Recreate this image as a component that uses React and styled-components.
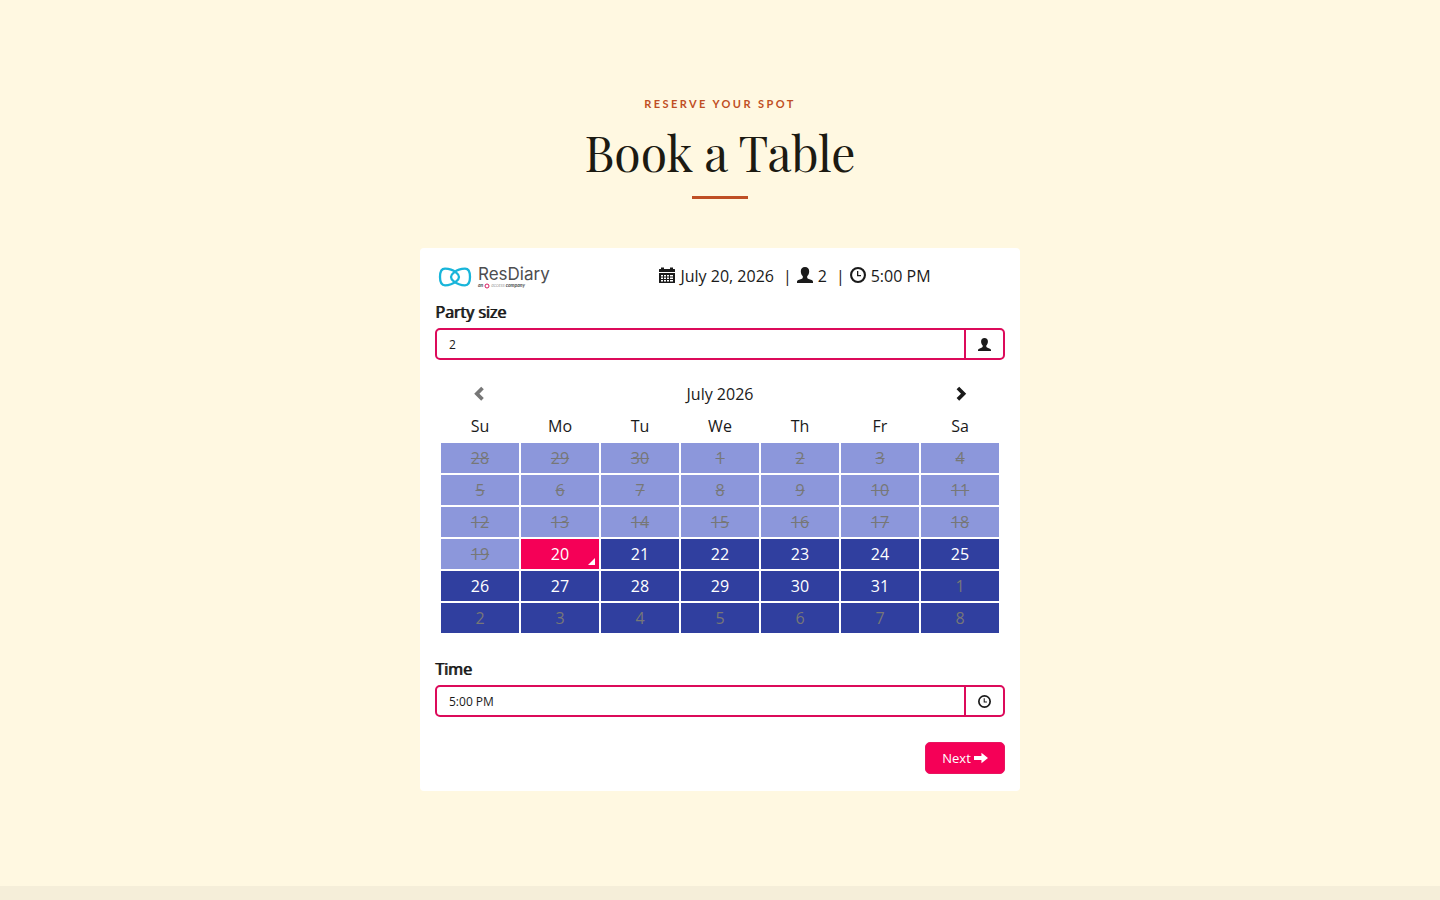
import React, { useState } from "react";

//Importing styles
import styled, { createGlobalStyle } from 'styled-components'


// Global styles
const GlobalStyle = createGlobalStyle`
    * {
        box-sizing: border-box;
    }

    body {
        margin: 0;
        background: #fff8e1;
        color: #1a1a1a;
        font-family: 'Open Sans', 'Noto Sans', sans-serif;
        font-size: 16px;
        line-height: 24px;
    }

    button, select {
        font-family: inherit;
    }
`;


// Page components
const Page = styled.div`
    display: flex;
    flex-direction: column;
    min-height: 100vh;
`;

const BookingSection = styled.section`
    display: flex;
    flex-direction: column;
    align-items: center;
    padding: 96px 24px 95px;
`;

const NextSection = styled.div`
    flex: 1;
    background: #f5eed9;
`;

const Eyebrow = styled.p`
    margin: 0;
    color: #bf4f24;
    font-family: Lato, sans-serif;
    font-size: 11px;
    font-weight: 700;
    letter-spacing: 0.22em;
    line-height: 16px;
    text-transform: uppercase;
`;

const Title = styled.h1`
    margin: 10px 0 14px;
    color: #1c1a12;
    font-family: 'Playfair Display', 'Liberation Serif', serif;
    font-size: 48px;
    font-weight: 400;
    line-height: 60px;
`;

const Rule = styled.div`
    width: 56px;
    height: 3px;
    margin-bottom: 49px;
    background: #bf4f24;
`;

const Card = styled.form`
    width: 100%;
    max-width: 600px;
    padding: 15px 15px 17px;
    border-radius: 4px;
    background: #fff;
`;


// Summary row styles
const CardHeader = styled.header`
    display: flex;
    align-items: center;
    height: 26px;
`;

const LogoLink = styled.a`
    display: flex;
    align-items: center;
    width: 150px;
    padding: 1px 0 0 3px;
    color: #4d4d4f;
    text-decoration: none;
`;

const LogoText = styled.span`
    display: flex;
    flex-direction: column;
    margin-left: 6px;
    font-family: Inter, sans-serif;
    font-size: 17px;
    line-height: 18px;
`;

const LogoTagline = styled.small`
    display: flex;
    align-items: center;
    gap: 1px;
    font-family: Lato, sans-serif;
    font-size: 5px;
    font-style: italic;
    font-weight: 700;
    line-height: 5px;

    i {
        color: #aaa;
        font-weight: 400;
    }
`;

const Summary = styled.div`
    display: flex;
    flex: 1;
    align-items: center;
    justify-content: center;
    gap: 5px;

    svg {
        margin-bottom: 2px;
    }
`;

const Divider = styled.span`
    margin-left: 4px;
`;


// Field styles
const Label = styled.label`
    display: block;
    margin-top: ${props => props.$gap};
    margin-bottom: 4px;
    text-shadow: 1px 0 currentColor;
`;

const Field = styled.div`
    display: flex;
    height: 32px;
    border: 2px solid #dc0a5a;
    border-radius: 5px;
`;

const Select = styled.select`
    flex: 1;
    padding: 0 12px;
    border: 0;
    background: transparent;
    color: #1a1a1a;
    font-size: 12px;
    appearance: none;
`;

const Addon = styled.span`
    display: flex;
    align-items: center;
    justify-content: center;
    width: 39px;
    border-left: 2px solid #dc0a5a;
`;


// Calendar styles
const Calendar = styled.table`
    width: calc(100% - 10px);
    margin: 18px 5px 0;
    border-collapse: collapse;
    table-layout: fixed;

    th, td {
        height: 32px;
        padding: 0;
        font-weight: 400;
        text-align: center;
    }
`;

const NavButton = styled.button`
    display: flex;
    align-items: center;
    justify-content: center;
    width: 100%;
    height: 32px;
    padding: 0;
    border: 0;
    background: none;
    color: #1a1a1a;

    &:disabled {
        color: #777;
    }
`;

const Day = styled.button`
    position: relative;
    display: block;
    width: 100%;
    height: 32px;
    padding: 0;
    border: 1px solid #fff;
    background: ${props => props.$selected ? '#f50057' : '#303f9f'};
    color: ${props => props.$outside ? '#777' : '#fff'};
    font-size: 16px;
    line-height: 24px;

    &:disabled {
        background: #8c97db;
        color: #777;
        text-decoration: line-through;
    }
`;

const TodayMark = styled.span`
    position: absolute;
    right: 4px;
    bottom: 4px;
    border: solid transparent;
    border-width: 0 0 7px 7px;
    border-bottom-color: #fff;
`;


// Footer styles
const Actions = styled.div`
    display: flex;
    justify-content: flex-end;
    margin-top: 25px;
`;

const NextButton = styled.button`
    display: flex;
    align-items: center;
    justify-content: center;
    gap: 3px;
    width: 80px;
    height: 32px;
    padding: 0;
    border: 1px solid #e8155f;
    border-radius: 5px;
    background: #f50057;
    color: #fff;
    font-size: 13px;
`;


// Icons
const icons = {
    calendar: <path d="M0 2.500Q0 2 .5 2H2V.5h3V2h6V.5h3V2h1.500q.5 0 .5.500V5H0zM0 6h16v9.500q0 .5-.5.500H.5q-.5 0-.5-.5zM2 8v1.500h2V8zm3 0v1.500h2V8zm3 0v1.500h2V8zm3 0v1.500h3V8zM2 10.500V12h2v-1.500zm3 0V12h2v-1.500zm3 0V12h2v-1.500zm3 0V12h3v-1.500zM2 13v1.500h2V13zm3 0v1.500h2V13zm3 0v1.500h2V13zm3 0v1.500h3V13z" fillRule="evenodd" />,
    user: <path d="M8 0c2.700 0 4.200 1.700 4.200 4.300 0 2.200-.8 3.900-2 5v1.200c0 .6.300.9.900 1.200l3.500 1.400c.9.400 1.400 1 1.400 1.900v1H0v-1c0-.9.500-1.500 1.400-1.900l3.500-1.400c.6-.3.900-.6.900-1.200V9.300c-1.200-1.100-2-2.800-2-5C3.800 1.700 5.300 0 8 0z" />,
    clock: <path d="M8 0a8 8 0 1 1 0 16A8 8 0 0 1 8 0zm0 2.100a5.900 5.900 0 1 0 0 11.800A5.900 5.900 0 0 0 8 2.100zM7 4h1.300v4H11v1.300H7z" fillRule="evenodd" />,
    left: <path d="M9.200.700l2.600 2.600-4.400 4.400 4.400 4.400-2.600 2.600-7-7z" />,
    right: <path d="M7.200.7L4.600 3.300 9 7.700l-4.400 4.400 2.600 2.600 7-7z" />,
    arrow: <path d="M0 5.700h8.500V2L16 8l-7.500 6v-3.700H0z" />,
};

function Icon({ name, size = 16 }) {
    return (
        <svg width={size} height={size} viewBox="0 0 16 16" fill="currentColor" aria-hidden="true">
            {icons[name]}
        </svg>
    );
}

function Logo() {
    return (
        <LogoLink href="#" aria-label="ResDiary">
            <svg width="34" height="22" viewBox="0 0 34 22" fill="none" stroke="#18b5da" strokeWidth="2.300" strokeLinejoin="round">
                <path d="M21 11c0 1.800-1.200 3.200-2.800 4.400C15 18 10.500 19.300 7 19.300 3.500 19.300 2 16.500 2 11s1.500-8.300 5-8.300c3.500 0 8 1.300 11.200 3.900C19.800 7.800 21 9.200 21 11z" />
                <path d="M13 11c0-1.800 1.200-3.200 2.800-4.400C19 4 23.500 2.700 27 2.700c3.500 0 5 2.800 5 8.300s-1.500 8.300-5 8.300c-3.500 0-8-1.300-11.200-3.900C14.200 14.200 13 12.800 13 11z" />
            </svg>
            <LogoText>
                ResDiary
                <LogoTagline>
                    an
                    <svg width="6" height="6" viewBox="0 0 6 6" fill="none" stroke="#d81b60">
                        <circle cx="3" cy="3" r="2" />
                    </svg>
                    <i>access</i> company
                </LogoTagline>
            </LogoText>
        </LogoLink>
    );
}


// Calendar data, starting with the last Sunday of June
const weekdays = ['Su', 'Mo', 'Tu', 'We', 'Th', 'Fr', 'Sa'];
const today = 22;

const weeks = [0, 1, 2, 3, 4, 5].map(week =>
    weekdays.map((name, i) => {
        const index = week * 7 + i;
        const date = new Date(2026, 5, 28 + index);
        return { index, number: date.getDate(), outside: date.getMonth() !== 6 };
    })
);


// Export App
export default function App() {
    const [selected, setSelected] = useState(today);
    const [size, setSize] = useState('2');
    const [time, setTime] = useState('5:00 PM');

    return (
        <Page>
            <GlobalStyle />
            <BookingSection>
                <Eyebrow>Reserve your spot</Eyebrow>
                <Title>Book a Table</Title>
                <Rule />
                <Card onSubmit={e => e.preventDefault()}>
                    <CardHeader>
                        <Logo />
                        <Summary>
                            <Icon name="calendar" />
                            <span>July 20, 2026</span>
                            <Divider>|</Divider>
                            <Icon name="user" />
                            <span>{size}</span>
                            <Divider>|</Divider>
                            <Icon name="clock" />
                            <span>{time}</span>
                        </Summary>
                    </CardHeader>

                    <Label htmlFor="party-size" $gap="11px">Party size</Label>
                    <Field>
                        <Select id="party-size" value={size} onChange={e => setSize(e.target.value)}>
                            {['1', '2', '3', '4', '5', '6'].map(n => <option key={n}>{n}</option>)}
                        </Select>
                        <Addon><Icon name="user" size={13} /></Addon>
                    </Field>

                    <Calendar>
                        <thead>
                            <tr>
                                <td><NavButton type="button" aria-label="Previous month" disabled><Icon name="left" /></NavButton></td>
                                <th colSpan="5">July 2026</th>
                                <td><NavButton type="button" aria-label="Next month"><Icon name="right" /></NavButton></td>
                            </tr>
                            <tr>
                                {weekdays.map(name => <th key={name} scope="col">{name}</th>)}
                            </tr>
                        </thead>
                        <tbody>
                            {weeks.map((week, i) => (
                                <tr key={i}>
                                    {week.map(day => (
                                        <td key={day.index}>
                                            <Day
                                                type="button"
                                                disabled={day.index < today}
                                                $outside={day.outside}
                                                $selected={day.index === selected}
                                                onClick={() => setSelected(day.index)}
                                            >
                                                {day.number}
                                                {day.index === today && <TodayMark />}
                                            </Day>
                                        </td>
                                    ))}
                                </tr>
                            ))}
                        </tbody>
                    </Calendar>

                    <Label htmlFor="time" $gap="23px">Time</Label>
                    <Field>
                        <Select id="time" value={time} onChange={e => setTime(e.target.value)}>
                            {['5:00 PM', '5:30 PM', '6:00 PM', '6:30 PM', '7:00 PM'].map(t => <option key={t}>{t}</option>)}
                        </Select>
                        <Addon><Icon name="clock" size={13} /></Addon>
                    </Field>

                    <Actions>
                        <NextButton type="submit">Next <Icon name="arrow" size={14} /></NextButton>
                    </Actions>
                </Card>
            </BookingSection>
            <NextSection />
        </Page>
    );
};
